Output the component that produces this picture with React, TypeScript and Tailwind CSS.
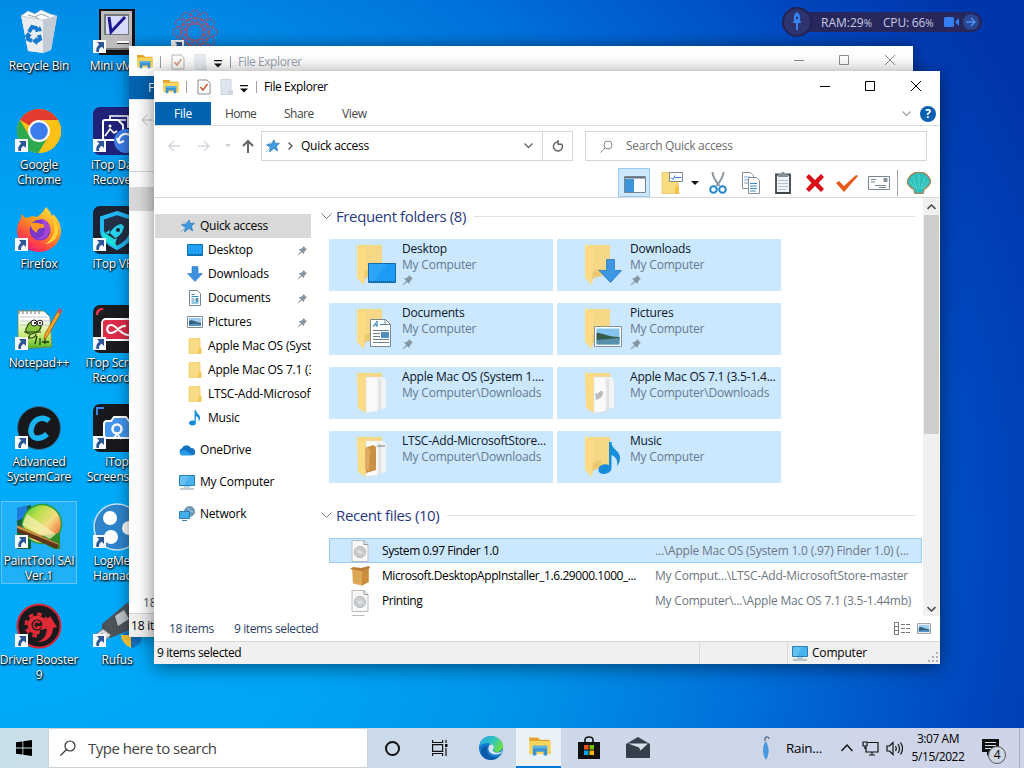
import React from "react";

interface IconProps {
  className?: string;
}

interface DesktopItem {
  label: string[];
  icon: React.ReactNode;
  shortcut?: boolean;
  selected?: boolean;
}

interface NavItem {
  title: string;
  icon: React.ReactNode;
  pinned?: boolean;
}

interface FolderItem {
  title: string;
  path: string;
  overlay: string;
  pinned?: boolean;
}

// ---------- desktop icons ----------

const Recycle = () => (
  <svg viewBox="0 0 48 48" className="h-12 w-12">
    <path d="M6 7l36 1-6 34-8 3-15-2z" fill="#dfe5ea" />
    <path d="M6 7l22 2 1 36-16-2z" fill="#e9edf0" />
    <path d="M28 9l14-1-6 34-8 3z" fill="#c3ccd4" />
    <path d="M6 8l7-5 7 3 6-4 9 4 7 2-14 4z" fill="#fbfcfd" stroke="#b4bec7" strokeWidth=".7" />
    <path d="M13 7l7 2 6-3 8 3M20 9l4 2" fill="none" stroke="#9aa6b0" strokeWidth="1" />
    <g fill="none" stroke="#1778cf" strokeWidth="4">
      <path d="M14 24l3-5 4 1 2 3" />
      <path d="M24 27l1 4-4 3" />
      <path d="M17 33l-4-2v-4" />
    </g>
    <path d="M20 24l7-1-2-5zM22 29v8l-5-4zM9 29l4-5 4 4z" fill="#1778cf" />
  </svg>
);

const MiniMac = () => (
  <svg viewBox="0 0 48 48" className="h-12 w-12">
    <path d="M6 1h36v46H6z" fill="#111" />
    <path d="M8 3h31v37H8z" fill="#bdbdbd" />
    <path d="M8 40h31v2H8z" fill="#777" />
    <path d="M11 6h25v21H11z" fill="#777" />
    <path d="M13 8h22v18H13z" fill="#d8dcfa" />
    <path d="M16 9l2 15L32 9" fill="none" stroke="#1c1790" strokeWidth="3" />
    <path d="M24 34h12" stroke="#fff" strokeWidth="2" />
    <path d="M24 35.5h12" stroke="#333" strokeWidth="1" />
  </svg>
);

const Atom = () => (
  <svg viewBox="0 0 48 48" className="h-12 w-12" fill="none" stroke="#8a5a86" strokeWidth="1.3" strokeDasharray="4 1">
    {[0, 30, 60, 90, 120, 150].map((angle) => (
      <ellipse key={angle} cx="24" cy="24" rx="22" ry="8" transform={`rotate(${angle} 24 24)`} />
    ))}
    <circle cx="24" cy="24" r="5" stroke="#2b7fd6" strokeDasharray="none" />
    <circle cx="24" cy="24" r="14" stroke="#b05562" />
  </svg>
);

const Chrome = () => (
  <svg viewBox="0 0 48 48" className="h-12 w-12">
    <circle cx="24" cy="24" r="22" fill="#fbc116" />
    <path d="M24 24L5 13A22 22 0 0143 13z" fill="#e33b2e" />
    <path d="M43 13H24v11z" fill="#e33b2e" />
    <path d="M5 13a22 22 0 0018.5 33L33.500 29 24 24 14.500 29z" fill="#2da94f" />
    <path d="M43 13H24a11 11 0 019.500 16.500L23.500 46A22 22 0 0043 13z" fill="#fbc116" />
    <circle cx="24" cy="24" r="11" fill="#fff" />
    <circle cx="24" cy="24" r="8.800" fill="#3b7ded" />
  </svg>
);

const DataRecovery = () => (
  <svg viewBox="0 0 48 48" className="h-12 w-12">
    <rect width="48" height="48" rx="7" fill="#1f2278" />
    <path d="M12 13h13l5 5v15H12a2 2 0 01-2-2V15a2 2 0 012-2z" fill="none" stroke="#fff" strokeWidth="2" />
    <path d="M17 12V9h18v12M26 13h7M12 29l5-7 4 4 3-2" fill="none" stroke="#fff" strokeWidth="1.700" />
    <circle cx="17" cy="19" r="1.500" fill="#fff" />
    <circle cx="33" cy="34" r="12" fill="#3a7fe8" />
    <path d="M26 36a7 7 0 1113 1M26 36l-2-5M26 36l5-2" fill="none" stroke="#fff" strokeWidth="2.200" />
  </svg>
);

const Firefox = () => (
  <svg viewBox="0 0 48 48" className="h-12 w-12">
    <defs>
      <linearGradient id="fox" x1=".8" y1="0" x2=".2" y2="1">
        <stop offset="0" stopColor="#ffe443" />
        <stop offset=".4" stopColor="#ff9a1f" />
        <stop offset=".75" stopColor="#ff4344" />
        <stop offset="1" stopColor="#e31587" />
      </linearGradient>
    </defs>
    <path
      d="M31 1c3 3 5 6 6 9 1-1 1-2 1-2 5 5 8 10 8 17a22 21 0 01-44 0c0-5 1-9 4-12 0-2 0-4 1-5 1 2 3 4 5 4 4-2 7-2 10-1 3-2 6-5 9-10z"
      fill="url(#fox)"
    />
    <circle cx="25" cy="24" r="10.500" fill="#7a35c9" />
    <path d="M15 18c6-3 10 0 14 0 4 1 2 4-2 4-5 0-5 4-5 5-4-2-6-5-7-9z" fill="#ff9922" />
    <path d="M25 13c8 0 13 8 8 16-4 5-10 5-13 3 9 1 14-8 5-19z" fill="#a445d8" />
    <path d="M37 11c6 10 2 22-7 27 14-1 17-17 7-27z" fill="#ffd23a" />
  </svg>
);

const Vpn = () => (
  <svg viewBox="0 0 48 48" className="h-12 w-12">
    <rect width="48" height="48" rx="7" fill="#1c2434" />
    <path d="M24 7l15 5v12c0 9-7 14-15 18C16 38 9 33 9 24V12z" fill="#233046" stroke="#22b8f5" strokeWidth="4" />
    <path d="M9 25c0 8 6 13 15 17l-3-9z" fill="#19e0d8" />
    <path d="M28 18c-5 1-9 5-11 9l5 5c5-2 8-6 9-12zM17 24l-5 3 4 1M24 32l-2 6-2-4" fill="#28d3f0" />
    <circle cx="25" cy="24" r="2" fill="#1c2434" />
  </svg>
);

const Notepad = () => (
  <svg viewBox="0 0 48 48" className="h-12 w-12">
    <defs>
      <linearGradient id="npp" x1="0" y1="0" x2="0" y2="1">
        <stop offset=".2" stopColor="#fdfdfb" />
        <stop offset=".65" stopColor="#c9ec74" />
        <stop offset="1" stopColor="#4bb31c" />
      </linearGradient>
    </defs>
    <path d="M3 6h26l6 6 2 30-34 2z" fill="url(#npp)" stroke="#718061" strokeWidth=".8" />
    <path d="M5 12h27M5 16h30M5 20h30" stroke="#b4bcc4" strokeWidth=".8" />
    <path d="M4 4v5M8 4v5M12 4v5M16 4v5M20 4v5M24 4v5" stroke="#888" strokeWidth="1.200" />
    <path d="M12 22c2-8 12-6 14-3 1 5-3 9-9 10-5 1-8-3-5-7z" fill="#8bc540" stroke="#27570d" strokeWidth="1.200" />
    <path d="M9 27h17M15 30l-3 5M21 29c0 4-6 5-8 3" stroke="#243811" strokeWidth="1.100" fill="none" />
    <circle cx="19" cy="18" r="3" fill="#fff" stroke="#222" />
    <circle cx="25" cy="18" r="2.800" fill="#fff" stroke="#222" />
    <circle cx="20" cy="18" r="1" />
    <circle cx="25" cy="18" r="1" />
    <path d="M20 39l2-8M25 40v-7M30 39v-6M27 37h7" stroke="#173c0e" strokeWidth="1.300" />
    <path d="M44 4l3 2-15 26-3 3 1-6z" fill="#f4a62a" stroke="#9c5d14" strokeWidth=".8" />
    <path d="M44 3l3 2-2 4-3-2z" fill="#c4526e" />
  </svg>
);

const ScreenRecorder = () => (
  <svg viewBox="0 0 48 48" className="h-12 w-12">
    <rect width="48" height="48" rx="7" fill="#1b1c20" />
    <path d="M4 10c0-4 2-6 6-6" stroke="#e5334a" strokeWidth="2.500" fill="none" />
    <rect x="9" y="14" width="30" height="21" rx="4" fill="#dc2d49" stroke="#fff" strokeWidth="1.800" />
    <path d="M36 30C28 31 24 20 18 20c-5 0-5 8 0 8 6 0 8-8 15-7" fill="none" stroke="#fff" strokeWidth="2.200" />
    <path d="M39 20l7-3v15l-7-4" fill="#dc2d49" />
  </svg>
);

const SystemCare = () => (
  <svg viewBox="0 0 48 48" className="h-12 w-12">
    <circle cx="24" cy="24" r="21.500" fill="#17181b" stroke="#2d7297" strokeWidth="1" />
    <path d="M34 17c-5-5-14-3-17 5-3 8 1 13 7 12 4 0 6-2 8-4" fill="none" stroke="#19b3f2" strokeWidth="5.500" />
  </svg>
);

const Screenshot = () => (
  <svg viewBox="0 0 48 48" className="h-12 w-12">
    <rect width="48" height="48" rx="7" fill="#18191d" />
    <path d="M4 11V4h7" stroke="#3c87e8" strokeWidth="2" fill="none" />
    <path d="M14 17h4l3-4h12l3 4h4q3 0 3 3v14H11V20q0-3 3-3z" fill="#4596ee" stroke="#fff" strokeWidth="2" />
    <circle cx="24" cy="25" r="4.500" fill="none" stroke="#fff" strokeWidth="2.500" />
    <path d="M20 35l4-5 4 5" stroke="#fff" strokeWidth="2" fill="none" />
  </svg>
);

const PaintTool = () => (
  <svg viewBox="0 0 48 48" className="h-12 w-12">
    <defs>
      <linearGradient id="sai" x1="0" y1="0" x2="1" y2=".8">
        <stop offset="0" stopColor="#3bbf3c" />
        <stop offset=".35" stopColor="#b9e04a" />
        <stop offset=".65" stopColor="#f4dc82" />
        <stop offset="1" stopColor="#ef5a2c" />
      </linearGradient>
    </defs>
    <path d="M2 5l14-3v44H2z" fill="#15613f" />
    <path d="M2 5l10-2v10L2 18z" fill="#1f7be0" />
    <circle cx="27" cy="21" r="19.500" fill="url(#sai)" stroke="#229c3d" strokeWidth="1.500" />
    <path d="M17 34l22 12h6V30z" fill="#2e8a2b" />
    <path d="M12 11l29 20-6 5L7 22z" fill="#f4efb0" opacity=".75" />
    <path d="M2 22l42 19-2 5L2 29z" fill="#5e3518" />
    <path d="M2 22l42 19v1L2 25z" fill="#c89146" />
  </svg>
);

const Hamachi = () => (
  <svg viewBox="0 0 48 48" className="h-12 w-12">
    <circle cx="24" cy="24" r="23" fill="#2f84cc" stroke="#c8e4f7" strokeWidth="1.500" />
    <circle cx="17" cy="15" r="7" fill="#fff" />
    <circle cx="36" cy="25" r="7" fill="#fff" />
    <circle cx="18" cy="34" r="7" fill="#fff" />
  </svg>
);

const DriverBooster = () => (
  <svg viewBox="0 0 48 48" className="h-12 w-12">
    <circle cx="24" cy="24" r="21.500" fill="#191a1d" stroke="#d82634" strokeWidth="2" />
    <g fill="none" stroke="#e32b36">
      <circle cx="22" cy="23" r="7.500" strokeWidth="4" />
      <circle cx="22" cy="23" r="11" strokeWidth="3" strokeDasharray="4.600 4" />
      <path d="M25 21a3.500 3.500 0 100 4h-3" strokeWidth="1.800" />
    </g>
    <path d="M25 28l10-2 6 2-8 12-10 2z" fill="#191a1d" />
    <path d="M21 40c8-1 11-7 11-16l-6 1 9-11 7 11-4 1c0 8-6 15-17 14z" fill="#e32b36" />
  </svg>
);

const Rufus = () => (
  <svg viewBox="0 0 48 48" className="h-12 w-12">
    <path d="M36 28h12v12c-3 3-6 5-8 6-6-3-10-8-10-14z" fill="#1474c4" />
    <path d="M28 33h10v13c-6-3-10-8-10-13z" fill="#f7bf36" />
    <path d="M9 22L34 1l14 3v20L27 32l-10 4-8-6z" fill="#4b525a" />
    <path d="M22 14l9-6 5 9-11 7z" fill="#bfc5ca" />
    <path d="M2 33l8-6 8 6-11 10-6-5z" fill="#d6dadd" stroke="#777" />
    <path d="M7 34l3-2M10 37l3-2" stroke="#555" strokeWidth="2" />
  </svg>
);

const ShortcutArrow = () => (
  <svg viewBox="0 0 13 13" className="absolute bottom-[3px] left-0 h-[13px] w-[13px]">
    <path d="M0 0h13v13H0z" fill="#f6f8fb" />
    <path d="M4 2h7v7L8.800 6.800C6.500 8 5.800 9.500 6 12H3.500C2.700 9 3.600 6.500 6.200 4.400z" fill="#2c5796" />
  </svg>
);

// ---------- explorer icons ----------

const ExplorerIcon = ({ className }: IconProps) => (
  <svg viewBox="0 0 20 18" className={className}>
    <path d="M1 1h7l2 2h8v3H1z" fill="#e2a32d" />
    <path d="M1 4h18v11H1z" fill="#fbd45f" />
    <path d="M4 8h12v8h-3v-3H7v3H4z" fill="#3c94d3" />
    <path d="M4 8h12v2H4z" fill="#5eb6e6" />
  </svg>
);

const CheckPage = () => (
  <svg viewBox="0 0 14 16" className="h-4 w-3.5">
    <path d="M1 1h9l3 3v11H1z" fill="#fff" stroke="#8b8b8b" />
    <path d="M3.500 8l2.500 3 4.500-6" fill="none" stroke="#c1592b" strokeWidth="1.500" />
  </svg>
);

const BlankPage = () => (
  <svg viewBox="0 0 14 16" className="h-4 w-3.5">
    <path d="M1 .5h10v15H1z" fill="#dfe6ef" stroke="#ccd5e0" />
    <path d="M8 11h5v5H8z" fill="#cfd9e6" />
  </svg>
);

const BarMenu = () => (
  <svg viewBox="0 0 8 8" className="h-2 w-2">
    <path d="M0 0h8v1.200H0zM0 3.500h8L4 7.500z" fill="#111" />
  </svg>
);

const Star = ({ className }: IconProps) => (
  <svg viewBox="0 0 14 14" className={className}>
    <path d="M8 1l1.200 3.500 4.300-.3-3.200 3 1.500 4.800-4-2.600L3.500 13l1-4.700L.5 5.800l4.600-.6z" fill="#3f9ade" stroke="#2679bd" strokeWidth=".7" />
    <path d="M0 13l5-5M2 4h3" stroke="#62b0e8" strokeWidth=".8" />
  </svg>
);

const DesktopSmall = () => (
  <svg viewBox="0 0 16 16" className="h-4 w-4">
    <path d="M.5 2.500h15v11H.5z" fill="#22a0f2" stroke="#0e6fb5" />
    <path d="M1 12.500h14" stroke="#0c5f9e" strokeDasharray="2 1" />
  </svg>
);

const DownArrow = ({ className }: IconProps) => (
  <svg viewBox="0 0 16 16" className={className}>
    <path d="M5 .5h6v7h4.500L8 15.500.5 7.500H5z" fill="#3d8fdf" stroke="#2e78c4" strokeWidth=".6" />
  </svg>
);

const DocSmall = () => (
  <svg viewBox="0 0 16 16" className="h-4 w-4">
    <path d="M2.500.5h8l3 3v12h-11z" fill="#fff" stroke="#768694" />
    <path d="M4.500 4.500h3M4.500 6.500h7M4.500 9h3M4.500 11h3M4.500 13h7" stroke="#2e87c4" />
    <path d="M8.500 8h3v4h-3z" fill="#5797b4" />
  </svg>
);

const PictureSmall = ({ className }: IconProps) => (
  <svg viewBox="0 0 16 12" className={className}>
    <path d="M.5.5h15v11H.5z" fill="#fff" stroke="#7c8996" />
    <path d="M2 2h12v8H2z" fill="#9bcdf0" />
    <path d="M2 5c3-2 5 1 12 2v3H2z" fill="#37607a" />
    <path d="M2 8.500c5-1 8-1 12 0V10H2z" fill="#5293c2" />
  </svg>
);

const FolderSmall = () => (
  <svg viewBox="0 0 16 16" className="h-4 w-4">
    <path d="M2 .5h11v12l1 3H2z" fill="#f9dc85" stroke="#eccb6c" strokeWidth=".8" />
    <path d="M11 13l1.500-4 2 1v5.500H11z" fill="#f1c758" />
  </svg>
);

const Note = ({ className }: IconProps) => (
  <svg viewBox="0 0 14 18" className={className}>
    <path d="M6.500 0H8c.5 4 5 4.500 5 9 0 2-1 3-2 4 1-4-1-5.500-3-6v7.500a4 3 0 01-8 .3C0 12.500 3 11 6.500 12.200z" fill="#168ddb" />
  </svg>
);

const Cloud = () => (
  <svg viewBox="0 0 16 11" className="h-[11px] w-4">
    <path d="M4 10a3.500 3.500 0 01-1-6.800A5 5 0 0112 3a4 4 0 013 7z" fill="#1272c4" />
    <path d="M3 10.500C0 10 0 6 3 5.500c2-.6 4 0 6 1.500l5 3.500z" fill="#2a9be6" />
  </svg>
);

const Computer = ({ className }: IconProps) => (
  <svg viewBox="0 0 16 16" className={className}>
    <path d="M.5 1.500h15v10H.5z" fill="#48b2ec" stroke="#277fb8" />
    <path d="M1 2h9L5 11H1z" fill="#7dcbf4" opacity=".6" />
    <path d="M5 13h6" stroke="#6caacb" />
    <path d="M1 15h14" stroke="#8795a0" />
  </svg>
);

const NetworkIcon = () => (
  <svg viewBox="0 0 16 16" className="h-4 w-4">
    <circle cx="10.500" cy="5.500" r="5" fill="#6f9cb9" stroke="#557f9e" strokeWidth=".8" />
    <path d="M8 2c3 1 2 3 6 4" stroke="#b5d2e4" fill="none" />
    <path d="M.5 5.500h10v7H.5z" fill="#45afe9" stroke="#277fb8" />
    <path d="M3 14.500h5" stroke="#477a9b" />
  </svg>
);

const Pin = ({ className }: IconProps) => (
  <svg viewBox="0 0 12 12" className={className} fill="#8795a3">
    <path d="M7 1l4 4-1.500.5L8 7.500 7.500 10 5.300 8 1 11.500.6 11 4.200 7 2 4.600 4.500 4l2-1.500z" />
  </svg>
);

const LargeFolder = ({ overlay }: { overlay: string }) => (
  <svg viewBox="0 0 48 48" className="h-12 w-12 shrink-0">
    <path d="M9 6h25v31H12z" fill="#f7d983" />
    <path d="M14 6h18q2 0 2 2v27H14z" fill="#f6d785" />
    {overlay === "paper" || overlay === "disk" || overlay === "box" ? (
      <>
        <path d="M9 5l9 4v37l-8-5z" fill="#fbdc84" />
        <path d="M18 10h17l3 3v28l-20 3z" fill="#f2f3f4" />
        <path d="M18 10h12v34l-12 2z" fill="#fafafa" stroke="#dde0e2" strokeWidth=".6" />
        <path d="M32 12v32" stroke="#d8dbdd" strokeWidth="1.500" />
        {overlay === "disk" && <path d="M19 26c4 3 5-5 8-1 0 5-3 7-7 8z" fill="#b8bcbf" />}
        {overlay === "box" && (
          <>
            <path d="M17 17l8-3 3 2v23l-10 3z" fill="#c98f42" />
            <path d="M17 17l5 1-1 22-4-2z" fill="#dfab62" />
            <path d="M29 15h8" stroke="#777" />
          </>
        )}
      </>
    ) : (
      <>
        <path d="M9 5l8 4v31l-1 6-7-7z" fill="#fbdc84" />
        <path d="M17 32l8-3v8l-9 3z" fill="#e6bf61" opacity=".7" />
      </>
    )}
    {overlay === "desktop" && (
      <>
        <path d="M20.500 24.500h27v19h-27z" fill="#1e9cf5" stroke="#176aaa" />
        <path d="M21 25h18L25 43h-4z" fill="#3badfa" opacity=".5" />
        <path d="M21 42.500h26" stroke="#145583" strokeDasharray="1 1" />
      </>
    )}
    {overlay === "downloads" && (
      <path d="M30.500 20.500h8v11h7L34.500 43.500 23 31.500h7.500z" fill="#3c96e4" stroke="#267ac3" strokeWidth=".8" />
    )}
    {overlay === "documents" && (
      <>
        <path d="M22.500 16.500h15l5 5v22h-20z" fill="#fff" stroke="#7b8894" />
        <path d="M37 16.500v5h5.500" fill="none" stroke="#7b8894" />
        <path d="M25 24l4-6v6M26 22h4M32 21.500h5" stroke="#277fb4" fill="none" />
        <path d="M25 27.500h16M25 30.500h7M25 33.500h7M25 36.500h16M25 39.500h16" stroke="#6f7d88" />
        <path d="M33 29h8v6h-8z" fill="#4e8dbe" />
      </>
    )}
    {overlay === "pictures" && (
      <>
        <path d="M18.500 23.500h27v20h-27z" fill="#fff" stroke="#8391a0" />
        <path d="M20.500 25.500h23v16h-23z" fill="#85c5ee" />
        <path d="M20.500 30c4-1 9 4 23 4v3h-23z" fill="#365d4b" />
        <path d="M20.500 37c8-1 15-1 23-2v6.500h-23z" fill="#588fac" />
      </>
    )}
    {overlay === "music" && (
      <path d="M33 11h2.500c0 8 8.500 8 8.500 16 0 3-1 6-3 8 1-6-1-9-5.500-11v13c0 7-13 8-13 2 0-5 6-7 10.500-5z" fill="#168ddb" />
    )}
  </svg>
);

const DiskFile = () => (
  <svg viewBox="0 0 18 22" className="h-[22px] w-[18px]">
    <path d="M1 .5h12l4 4v17H1z" fill="#f7f7f7" stroke="#b9bcbf" />
    <path d="M13 .5v4h4" fill="none" stroke="#999" />
    <circle cx="9" cy="12" r="5.500" fill="#c9cdd0" stroke="#b0b3b6" />
    <path d="M5 10l8 4" stroke="#dfe2e3" />
    <circle cx="9" cy="12" r="1.500" fill="#e6e6e6" />
  </svg>
);

const BoxFile = () => (
  <svg viewBox="0 0 20 20" className="h-5 w-5">
    <path d="M2 2l9 1.500 8-2.500v15l-7 3.500-9-2z" fill="#dda756" />
    <path d="M12 4l6-2v14l-6 3.500z" fill="#c88c3b" />
    <path d="M0 3l3-2 8 1 8-2 1 2-8 3z" fill="#b87d33" />
  </svg>
);

const WindowButtons = ({ muted }: { muted?: boolean }) => (
  <svg viewBox="0 0 120 12" className="h-3 w-[120px]" fill="none" stroke={muted ? "#8d8d8d" : "#000"}>
    <path d="M10 6.500h10" />
    <path d="M55.500 1.500h9v9h-9z" />
    <path d="M101 1l10 10M111 1l-10 10" />
  </svg>
);

// ---------- data ----------

const desktopColumns: DesktopItem[][] = [
  [
    { label: ["Recycle Bin"], icon: <Recycle /> },
    { label: ["Google", "Chrome"], icon: <Chrome />, shortcut: true },
    { label: ["Firefox"], icon: <Firefox />, shortcut: true },
    { label: ["Notepad++"], icon: <Notepad />, shortcut: true },
    { label: ["Advanced", "SystemCare"], icon: <SystemCare />, shortcut: true },
    { label: ["PaintTool SAI", "Ver.1"], icon: <PaintTool />, shortcut: true, selected: true },
    { label: ["Driver Booster", "9"], icon: <DriverBooster />, shortcut: true },
  ],
  [
    { label: ["Mini vMac"], icon: <MiniMac />, shortcut: true },
    { label: ["iTop Data", "Recovery"], icon: <DataRecovery />, shortcut: true },
    { label: ["iTop VPN"], icon: <Vpn />, shortcut: true },
    { label: ["iTop Screen", "Recorder"], icon: <ScreenRecorder />, shortcut: true },
    { label: ["iTop", "Screenshot"], icon: <Screenshot />, shortcut: true },
    { label: ["LogMeIn", "Hamachi"], icon: <Hamachi />, shortcut: true },
    { label: ["Rufus"], icon: <Rufus />, shortcut: true },
  ],
  [{ label: [], icon: <Atom />, shortcut: true }],
];

const quickItems: NavItem[] = [
  { title: "Desktop", icon: <DesktopSmall />, pinned: true },
  { title: "Downloads", icon: <DownArrow className="h-4 w-4" />, pinned: true },
  { title: "Documents", icon: <DocSmall />, pinned: true },
  { title: "Pictures", icon: <PictureSmall className="h-3 w-4" />, pinned: true },
  { title: "Apple Mac OS (System", icon: <FolderSmall /> },
  { title: "Apple Mac OS 7.1 (3.5", icon: <FolderSmall /> },
  { title: "LTSC-Add-MicrosoftStore", icon: <FolderSmall /> },
  { title: "Music", icon: <Note className="h-4 w-3" /> },
];

const rootItems: NavItem[] = [
  { title: "OneDrive", icon: <Cloud /> },
  { title: "My Computer", icon: <Computer className="h-4 w-4" /> },
  { title: "Network", icon: <NetworkIcon /> },
];

const folders: FolderItem[] = [
  { title: "Desktop", path: "My Computer", overlay: "desktop", pinned: true },
  { title: "Downloads", path: "My Computer", overlay: "downloads", pinned: true },
  { title: "Documents", path: "My Computer", overlay: "documents", pinned: true },
  { title: "Pictures", path: "My Computer", overlay: "pictures", pinned: true },
  { title: "Apple Mac OS (System 1....", path: "My Computer\\Downloads", overlay: "paper" },
  { title: "Apple Mac OS 7.1 (3.5-1.4...", path: "My Computer\\Downloads", overlay: "disk" },
  { title: "LTSC-Add-MicrosoftStore...", path: "My Computer\\Downloads", overlay: "box" },
  { title: "Music", path: "My Computer", overlay: "music" },
];

const recentFiles = [
  {
    title: "System 0.97 Finder 1.0",
    path: "...\\Apple Mac OS (System 1.0 (.97) Finder 1.0) (...",
    icon: <DiskFile />,
    selected: true,
  },
  {
    title: "Microsoft.DesktopAppInstaller_1.6.29000.1000_...",
    path: "My Comput...\\LTSC-Add-MicrosoftStore-master",
    icon: <BoxFile />,
  },
  { title: "Printing", path: "My Computer\\...\\Apple Mac OS 7.1 (3.5-1.44mb)", icon: <DiskFile /> },
  { title: "", path: "", icon: <DiskFile /> },
];

// ---------- parts ----------

function DesktopIcon({ item }: { item: DesktopItem }) {
  return (
    <div
      className={`flex h-[83px] w-[76px] flex-col items-center ${
        item.selected ? "border border-[#63c6f7] bg-[#3fb5f3]/50 pt-px" : "pt-0.5"
      }`}
    >
      <div className="relative h-12 w-12 shrink-0">
        {item.icon}
        {item.shortcut && <ShortcutArrow />}
      </div>
      <div className="mt-0.5 text-center leading-[15px] whitespace-nowrap text-white [text-shadow:1px_1px_2px_#000,0_1px_2px_#000]">
        {item.label.map((line) => (
          <div key={line}>{line}</div>
        ))}
      </div>
    </div>
  );
}

function TitleBar({ muted }: { muted?: boolean }) {
  return (
    <div className={`flex h-[31px] shrink-0 items-center ${muted ? "pl-[7px]" : "pl-2"}`}>
      <ExplorerIcon className="h-4 w-[18px]" />
      <div className="ml-1.5 h-3 w-px bg-gray-400" />
      <div className={`flex items-center ${muted ? "opacity-60" : ""}`}>
        <div className="ml-2.5"><CheckPage /></div>
        <div className="ml-[9px]"><BlankPage /></div>
      </div>
      <div className="mt-1 ml-1.5"><BarMenu /></div>
      <div className="ml-2 h-3 w-px bg-gray-400" />
      <span className={`ml-[7px] tracking-[-0.42px] ${muted ? "text-gray-400" : "text-black"}`}>File Explorer</span>
      <div className={`ml-auto flex ${muted ? "mr-[9px] -mt-[3px]" : "mr-2.5 -mt-px"}`}><WindowButtons muted={muted} /></div>
    </div>
  );
}

function NavArrow({ className }: IconProps) {
  return (
    <svg viewBox="0 0 12 12" className={className} fill="none" stroke="currentColor" strokeWidth="1.300">
      <path d="M12 6H1M6 1L1 6l5 5" />
    </svg>
  );
}

function BackWindow() {
  return (
    <div className="absolute top-[46px] left-[129px] flex h-[591px] w-[784px] flex-col bg-white shadow-[0_0_14px_rgba(0,0,0,0.45)]">
      <TitleBar muted />
      <div className="-mt-px flex h-6 border-b border-gray-200">
        <div className="flex w-14 items-center justify-center bg-[#0063b1] text-white">File</div>
      </div>
      <div className="flex h-10 items-center pl-3">
        <NavArrow className="h-3 w-3 text-gray-300" />
      </div>
      <div className="mt-[31px] h-4 border-t border-gray-300" />
      <div className="h-6 w-40 bg-[#d9d9d9]" />
      <div className="flex-1" />
      <div className="flex h-[21px] items-center pl-3.5 text-gray-600">18 items</div>
      <div className="flex h-6 items-center border-t border-gray-300 bg-[#f0f0f0] pl-0.5 text-black">18 items</div>
    </div>
  );
}

function AddressRow() {
  return (
    <div className="flex h-10 shrink-0 items-center pl-3.5">
      <NavArrow className="h-3 w-3 text-gray-300" />
      <NavArrow className="ml-[18px] h-3 w-3 rotate-180 text-gray-300" />
      <svg viewBox="0 0 6 4" className="ml-[15px] h-1 w-1.5">
        <path d="M0 0h6L3 3.500z" fill="#d2d2d2" />
      </svg>
      <svg viewBox="0 0 12 14" className="ml-[11px] h-3.5 w-3" fill="none" stroke="#666" strokeWidth="2">
        <path d="M6 14V2M1 7l5-5 5 5" />
      </svg>
      <div className="ml-[7px] flex h-[30px] w-[312px] items-center border border-[#d5d5d5]">
        <Star className="ml-1 h-3.5 w-3.5" />
        <svg viewBox="0 0 5 8" className="ml-2 h-2 w-[5px]">
          <path d="M.5.5L4 4 .5 7.500" fill="none" stroke="#555" strokeWidth="1.300" />
        </svg>
        <span className="ml-2 tracking-[-0.28px] text-black">Quick access</span>
        <svg viewBox="0 0 9 6" className="mr-[9px] ml-auto h-1.5 w-[9px]">
          <path d="M.5.5l4 4 4-4" fill="none" stroke="#666" strokeWidth="1.400" />
        </svg>
        <div className="flex h-full w-[30px] items-center justify-center border-l border-[#d5d5d5]">
          <svg viewBox="0 0 12 12" className="h-3 w-3" fill="none" stroke="#666" strokeWidth="1.500">
            <path d="M9.800 4.200A4.500 4.500 0 116.500 2M6.200 0v4.200H10" />
          </svg>
        </div>
      </div>
      <div className="ml-3 flex h-[30px] w-[342px] items-center border border-[#d5d5d5] pl-3.5">
        <svg viewBox="0 0 13 13" className="h-[13px] w-[13px]" fill="none" stroke="#888">
          <circle cx="8" cy="5" r="4" />
          <path d="M5 8L.5 12.500" />
        </svg>
        <span className="ml-[13px] tracking-[-0.3px] text-[#6d6d6d]">Search Quick access</span>
      </div>
    </div>
  );
}

function Toolbar() {
  return (
    <div className="flex h-8 shrink-0 items-center border-b border-[#d9d9d9] pt-0.5 pl-[464px]">
      <div className="flex h-[29px] w-8 items-center justify-center border border-[#99ccf3] bg-[#cce8ff] pt-1 pl-0.5">
        <svg viewBox="0 0 22 17" className="h-[17px] w-[22px]">
          <path d="M.5.5h21v16H.5z" fill="#f7fbff" stroke="#77848f" />
          <path d="M1 1h20v1.500H1z" fill="#64717c" />
          <path d="M1 3h9v13H1z" fill="#3a94d8" />
        </svg>
      </div>
      <svg viewBox="0 0 22 22" className="ml-[11px] h-[22px] w-[22px]">
        <path d="M1 .5h16v17l1 4H1z" fill="#f9dc7d" stroke="#e4c162" strokeWidth=".8" />
        <path d="M14 21.500V16l2-4 2 3v6.500z" fill="#efc449" />
        <path d="M8.500.5h13v9h-13z" fill="#fff" stroke="#7c8790" />
        <path d="M10 5.500l2 2 2-4M14 5.500h6" stroke="#3c78d8" fill="none" />
      </svg>
      <svg viewBox="0 0 8 4" className="ml-[8px] h-1 w-2"><path d="M0 0h8L4 4z" fill="#111" /></svg>
      <svg viewBox="0 0 18 22" className="ml-[10px] h-[22px] w-[18px]" fill="none">
        <path d="M3.500 0c0 5 3 9 7 14M14.500 0c0 5-3 9-7 14" stroke="#8b97a1" strokeWidth="2" />
        <circle cx="4.500" cy="17.500" r="3.300" stroke="#2388c8" strokeWidth="2" />
        <circle cx="13.500" cy="17.500" r="3.300" stroke="#2388c8" strokeWidth="2" />
      </svg>
      <svg viewBox="0 0 20 22" className="ml-3.5 h-[22px] w-5" fill="#fff" stroke="#84909b">
        <path d="M1.500.5h8l3 3v13h-11z" />
        <path d="M3 5h6M3 8h7M3 11h7" stroke="#7ba4cb" />
        <path d="M7.500 5.500h8l3 3v13h-11z" />
        <path d="M9 11.500h7M9 14h7M9 16.500h7M9 19h6" stroke="#438fc9" />
      </svg>
      <svg viewBox="0 0 18 22" className="ml-[13px] h-[22px] w-[18px]">
        <path d="M2 2.500h14V21H2z" fill="#eff4f8" stroke="#3f464b" strokeWidth="1.800" />
        <path d="M4 2h3l1-2h2l1 2h3v3H4z" fill="#849097" />
        <path d="M4 8.500h10M4 11.500h10M4 14.500h10M4 17.500h8" stroke="#b5c3ce" />
      </svg>
      <svg viewBox="0 0 20 20" className="ml-[13px] h-5 w-5">
        <path d="M4 1l6 6 6-6 3 3-5.500 6 5.500 6-3 3-6-6-6 6-3-3 5.500-6L1 4z" fill="#d9101b" />
      </svg>
      <svg viewBox="0 0 22 18" className="ml-[11px] h-[18px] w-[22px]">
        <path d="M0 9l3-2 5 5L20 1l2 1L8 18z" fill="#e8591c" />
      </svg>
      <svg viewBox="0 0 22 14" className="ml-[10px] h-3.5 w-[22px]" fill="none" stroke="#7a8691">
        <path d="M.5.500h21v13H.5z" fill="#fff" />
        <path d="M3 3.500h5M3 6h4M7 9.500h11M11 11.500h7" />
        <path d="M16 2.500h3v3h-3z" fill="#8b97a1" />
      </svg>
      <div className="ml-[7px] h-[26px] w-px bg-gray-400" />
      <svg viewBox="0 0 24 22" className="ml-[9px] h-[22px] w-6">
        <path d="M12 .5c5-1 9 3 11 7 2 4-3 8-6 10l-1 4H8l-1-4C3 15-1 11 1 7.500 3 3 8-.5 12 .5z" fill="#2cc2bb" stroke="#a5835c" strokeWidth="1.400" />
        <path d="M12 17V3M10 17L6 5M14 17l4-12M8 17L3 9M16 17l5-8" stroke="#63dad0" strokeWidth=".8" />
      </svg>
    </div>
  );
}

function NavRow({ item, indent }: { item: NavItem; indent?: boolean }) {
  return (
    <div className={`flex h-6 items-center overflow-hidden whitespace-nowrap text-black ${indent ? "pl-[33px]" : "pl-[25px]"}`}>
      <span className="flex w-4 shrink-0 items-center justify-center">{item.icon}</span>
      <span className="ml-[5px]">{item.title}</span>
      {item.pinned && <Pin className="mr-[3px] ml-auto h-[11px] w-[11px]" />}
    </div>
  );
}

function NavPane() {
  return (
    <div className="w-[157px] shrink-0 overflow-hidden pt-4">
      <div className="ml-px flex h-6 items-center bg-[#d9d9d9] pl-[26px] text-black">
        <Star className="h-3.5 w-3.5" />
        <span className="ml-[5px] tracking-[-0.28px]">Quick access</span>
      </div>
      {quickItems.map((item) => (
        <NavRow key={item.title} item={item} indent />
      ))}
      <div className="mt-2 flex flex-col gap-2">
        {rootItems.map((item) => (
          <NavRow key={item.title} item={item} />
        ))}
      </div>
    </div>
  );
}

function GroupHeader({ title }: { title: string }) {
  return (
    <div className="flex h-6 items-center pr-2">
      <svg viewBox="0 0 11 7" className="h-[7px] w-[11px]">
        <path d="M.5.5l5 5 5-5" fill="none" stroke="#777" />
      </svg>
      <span className="ml-1 text-[15px] tracking-[-0.38px] whitespace-nowrap text-[#2a3a80]">{title}</span>
      <div className="ml-2 h-px flex-1 bg-[#e2e2e2]" />
    </div>
  );
}

function FolderTile({ folder }: { folder: FolderItem }) {
  return (
    <div className="flex h-[52px] w-[224px] bg-[#cce8ff] pl-[19px]">
      <LargeFolder overlay={folder.overlay} />
      <div className="ml-1.5 pt-0.5 leading-4 whitespace-nowrap">
        <div className="text-[#0b1524]">{folder.title}</div>
        <div className="text-[#667a8c]">{folder.path}</div>
        {folder.pinned && <Pin className="mt-px h-3 w-3" />}
      </div>
    </div>
  );
}

function MainPane() {
  return (
    <div className="ml-[10px] flex-1 overflow-hidden pt-1.5">
      <GroupHeader title="Frequent folders (8)" />
      <div className="mt-[11px] ml-2 grid w-[452px] grid-cols-2 gap-x-1 gap-y-3">
        {folders.map((folder) => (
          <FolderTile key={folder.title} folder={folder} />
        ))}
      </div>
      <div className="mt-5">
        <GroupHeader title="Recent files (10)" />
      </div>
      <div className="mt-[11px] mr-px ml-2">
        {recentFiles.map((file, i) => (
          <div
            key={i}
            className={`flex h-[25px] items-center border whitespace-nowrap ${
              file.selected ? "border-[#99cdf5] bg-[#cce8ff]" : "border-transparent"
            }`}
          >
            <div className="ml-5 flex w-5 shrink-0 justify-center">{file.icon}</div>
            <div className="ml-3 w-[273px] tracking-[-0.43px] text-black">{file.title}</div>
            <div className="text-[#6c7680]">{file.path}</div>
          </div>
        ))}
      </div>
    </div>
  );
}

function ScrollBar() {
  return (
    <div className="mr-px flex w-4 shrink-0 flex-col items-center bg-[#f0f0f0]">
      <svg viewBox="0 0 9 6" className="mt-1.5 h-1.5 w-[9px]">
        <path d="M.5 5l4-4 4 4" fill="none" stroke="#505050" strokeWidth="1.600" />
      </svg>
      <div className="mt-[5px] h-[219px] w-[15px] bg-[#cdcdcd]" />
      <svg viewBox="0 0 9 6" className="mt-auto mb-1 h-1.5 w-[9px]">
        <path d="M.5 1l4 4 4-4" fill="none" stroke="#505050" strokeWidth="1.600" />
      </svg>
    </div>
  );
}

function FrontWindow() {
  return (
    <div className="absolute top-[71px] left-[154px] flex h-[593px] w-[786px] flex-col bg-white shadow-[0_3px_18px_rgba(0,0,0,0.5)]">
      <TitleBar />
      <div className="flex h-6 shrink-0 items-center border-b border-[#dcdcdc] text-[#444]">
        <div className="ml-px flex h-full w-14 items-center justify-center bg-[#0063b1] text-white">File</div>
        <span className="ml-3.5 w-[59px] tracking-[-0.7px]">Home</span>
        <span className="w-[58px] tracking-[-0.5px]">Share</span>
        <span className="tracking-[-0.4px]">View</span>
        <svg viewBox="0 0 9 6" className="ml-auto h-1.5 w-[9px]">
          <path d="M.5.5l4 4 4-4" fill="none" stroke="#aaa" strokeWidth="1.400" />
        </svg>
        <div className="mr-1 ml-[9px] flex h-4 w-4 items-center justify-center rounded-full bg-[#0b5fb0] text-xs font-bold text-white">
          ?
        </div>
      </div>
      <AddressRow />
      <Toolbar />
      <div className="flex h-[418px] shrink-0">
        <NavPane />
        <MainPane />
        <ScrollBar />
      </div>
      <div className="flex flex-1 items-center pl-[15px] text-[#2c4263]">
        <span className="w-[65px] tracking-[-0.36px]">18 items</span>
        <span className="tracking-[-0.38px]">9 items selected</span>
        <svg viewBox="0 0 16 13" className="ml-auto h-[13px] w-4" fill="none" stroke="#777">
          <path d="M.5.5h4v12h-4zM.5 4.500h4M.5 8.500h4" />
          <path d="M7 2.500h4M12 2.500h4M7 6.500h4M12 6.500h4M7 10.500h4M12 10.500h4" />
        </svg>
        <PictureSmall className="mr-[9px] ml-[7px] h-[11px] w-3.5" />
      </div>
      <div className="flex h-[23px] items-center border-t border-[#d7d7d7] bg-[#f0f0f0] pl-[3px] text-black">
        <span className="w-[542px] tracking-[-0.38px]">9 items selected</span>
        <div className="h-full w-[89px] border-x border-[#dadada]" />
        <Computer className="ml-1 h-4 w-4" />
        <span className="ml-1">Computer</span>
        <svg viewBox="0 0 10 10" className="mt-auto mr-0.5 mb-0.5 ml-auto h-2.5 w-2.5" fill="#b2b2b2">
          <path d="M8 0h2v2H8zM4 4h2v2H4zM8 4h2v2H8zM0 8h2v2H0zM4 8h2v2H4zM8 8h2v2H8z" />
        </svg>
      </div>
    </div>
  );
}

function Monitor() {
  return (
    <div className="absolute top-[7px] left-[782px] flex h-[30px] w-[200px] items-center">
      <div className="absolute left-3 h-5 w-[188px] rounded-full bg-[#27275c]" />
      <div className="relative flex h-[30px] w-[30px] items-center justify-center rounded-full border-2 border-[#232253] bg-[#2d3470]">
        <svg viewBox="0 0 10 20" className="h-5 w-2.5">
          <path d="M5 0c3 2 3.500 5 3 8l1 3H1l1-3C1.500 5 2 2 5 0zM4 11h2v7H4z" fill="#3385f4" />
          <circle cx="5" cy="6" r="1.300" fill="#2d3470" />
        </svg>
      </div>
      <span className="relative mt-0.5 ml-[9px] w-[53px] tracking-[0px] text-[#c9cbe2]">RAM:29<small className="text-[10px]">%</small></span>
      <span className="relative mt-0.5 ml-[9px] w-[52px] text-[#c9cbe2]">CPU: 66<small className="text-[10px]">%</small></span>
      <svg viewBox="0 0 15 10" className="relative ml-[9px] h-2.5 w-[15px]">
        <path d="M1.500 0h7Q10 0 10 1.500v7Q10 10 8.500 10h-7Q0 10 0 8.500v-7Q0 0 1.500 0zM11 5l4-4v8z" fill="#347ff0" />
      </svg>
      <div className="relative ml-1 flex h-4 w-4 items-center justify-center rounded-full bg-[#2a4793]">
        <svg viewBox="0 0 10 10" className="h-2.5 w-2.5">
          <path d="M0 5h9M5 1l4 4-4 4" fill="none" stroke="#4b93f5" strokeWidth="1.400" />
        </svg>
      </div>
    </div>
  );
}

function Taskbar() {
  return (
    <div className="absolute inset-x-0 bottom-0 flex h-10 items-center bg-linear-to-r from-[#c9dfe9] via-[#ccd9e9] to-[#cfd4e8] text-black">
      <div className="flex w-12 justify-center">
        <svg viewBox="0 0 16 16" className="h-4 w-4">
          <path d="M0 2.300L6.500 1.400v6.200H0zM7.300 1.300L16 0v7.600H7.300zM0 8.400h6.500v6.200L0 13.700zM7.300 8.400H16V16l-8.700-1.300z" />
        </svg>
      </div>
      <div className="flex h-full w-[320px] items-center border border-[#c9d2d8] bg-white pl-[11px]">
        <svg viewBox="0 0 16 16" className="h-4 w-4" fill="none" stroke="#333" strokeWidth="1.200">
          <circle cx="10" cy="6" r="5" />
          <path d="M6.500 9.500L.5 15.500" />
        </svg>
        <span className="ml-3 text-[15px] tracking-[-0.5px] text-[#444]">Type here to search</span>
      </div>
      <div className="flex w-12 justify-center">
        <div className="h-[15px] w-[15px] rounded-full border-2 border-[#111]" />
      </div>
      <div className="flex w-12 justify-center">
        <svg viewBox="0 0 16 16" className="h-4 w-4" fill="none" stroke="#111" strokeWidth="1.200">
          <path d="M.6 0v2.500h10V0M.6 16v-2.500h10V16M.6 4.600h10v6.800H.6zM14 0v3M14 8v8" />
          <path d="M13 4h2.500v3H13z" fill="#111" stroke="none" />
        </svg>
      </div>
      <div className="flex w-[52px] justify-center pl-0.5">
        <svg viewBox="0 0 24 24" className="h-6 w-6">
          <defs>
            <linearGradient id="edge" x1="0" y1="0" x2="1" y2=".4">
              <stop offset="0" stopColor="#27a5e8" />
              <stop offset=".6" stopColor="#30c6c2" />
              <stop offset="1" stopColor="#67dc4c" />
            </linearGradient>
          </defs>
          <circle cx="12" cy="12" r="12" fill="#147ad0" />
          <path d="M0 11C1 4 6 0 12 0c8 0 13 7 12 11-1 5-7 6-10 4 2-3 0-7-5-8-4 0-8 2-9 4z" fill="url(#edge)" />
          <path d="M9 10c-4 6 2 13 10 11-6 6-17 2-17-5 0-4 3-6 7-6z" fill="#0e58a8" />
          <path d="M14 15c-1-1 1-2 1-4-1-3-4-3-5-1-3 7 6 11 12 7 1-1 2-2 1-2-3 2-7 2-9 0z" fill="#d5e5ef" />
        </svg>
      </div>
      <div className="flex h-full w-[45px] items-center justify-center border-b-2 border-[#0078d7] bg-[#eaf2f8] pl-0.5">
        <ExplorerIcon className="h-[22px] w-6" />
      </div>
      <div className="flex w-[53px] justify-center pl-0.5">
        <svg viewBox="0 0 22 24" className="h-6 w-[22px]">
          <path d="M7 8V4q0-3 4-3t4 3v4" fill="none" stroke="#111" strokeWidth="1.600" />
          <path d="M0 6h22v17H0z" fill="#111" />
          <path d="M6 9h4.500v4.500H6z" fill="#f25022" />
          <path d="M11.500 9H16v4.500h-4.500z" fill="#7fba00" />
          <path d="M6 14.500h4.500V19H6z" fill="#00a4ef" />
          <path d="M11.500 14.500H16V19h-4.500z" fill="#ffb900" />
        </svg>
      </div>
      <div className="flex w-12 justify-center">
        <svg viewBox="0 0 24 22" className="h-[22px] w-6">
          <path d="M0 7l12-7 12 7v14H0z" fill="#33404a" />
          <path d="M2 6.500h20L13 15l-3-3z" fill="#d5dfe8" />
          <path d="M2 6.500l11 4 2 4-4 1z" fill="#33404a" />
        </svg>
      </div>
      <svg viewBox="0 0 8 24" className="ml-[100px] h-6 w-2">
        <path d="M4 24C0 18 0 10 4 5c3 6 4 12 0 19z" fill="#4a97df" />
        <path d="M3 5c-1-5 4-5 4-2" fill="none" stroke="#5a6d80" strokeWidth="1.300" />
      </svg>
      <span className="ml-4 w-[38px] text-[13.5px] tracking-[-0.3px]">Rain...</span>
      <svg viewBox="0 0 12 8" className="ml-[17px] h-2 w-3"><path d="M.5 7L6 1l5.500 6" fill="none" stroke="#111" strokeWidth="1.400" /></svg>
      <svg viewBox="0 0 17 15" className="ml-[9px] h-[15px] w-[17px]" fill="none" stroke="#111" strokeWidth="1.200">
        <path d="M6 1.500h10V11H4V6M10 11v3M7 14h6M1 1h4v4H1zM3 5v3" />
      </svg>
      <svg viewBox="0 0 17 15" className="ml-[7px] h-[15px] w-[17px]" fill="none" stroke="#111" strokeWidth="1.200">
        <path d="M1 5h2.500L7 1.500v12L3.500 10H1zM9.500 5q1.500 2.500 0 5M12 3q3 4.500 0 9M14.500 1.500q4 6 0 12" />
      </svg>
      <div className="ml-2 w-[54px] text-center leading-[18px] tracking-[-0.45px]">
        <div>3:07 AM</div>
        <div>5/15/2022</div>
      </div>
      <div className="relative ml-[17px] h-6 w-6">
        <svg viewBox="0 0 24 24" className="h-6 w-6">
          <path d="M0 3h17v13h-8l-4 4v-4H0z" fill="#111" />
          <path d="M3 6.500h11M3 9.500h11M3 12.500h7" stroke="#d7deea" />
        </svg>
        <span className="absolute top-2.5 left-1.5 flex h-[18px] w-[18px] items-center justify-center rounded-full border border-[#555] bg-[#cfd6e3] text-[12px]">
          4
        </span>
      </div>
      <div className="ml-auto h-full w-[5px] border-l border-[#a5b2c6]" />
    </div>
  );
}

export default function App() {
  return (
    <div className="relative h-[768px] w-[1024px] overflow-hidden bg-[radial-gradient(ellipse_110%_130%_at_0%_70%,#00acfb_0%,#00a5f7_30%,#0092ea_50%,#006cd8_70%,#0046be_88%,#0036ac_100%)] font-['Open_Sans','Noto_Sans',sans-serif] text-[12px] tracking-[-0.2px]">
      <div className="flex gap-0.5 pt-1.5 pl-px">
        {desktopColumns.map((column, i) => (
          <div key={i} className="flex flex-col gap-4">
            {column.map((item, j) => (
              <DesktopIcon key={j} item={item} />
            ))}
          </div>
        ))}
      </div>
      <BackWindow />
      <FrontWindow />
      <Monitor />
      <Taskbar />
    </div>
  );
}
